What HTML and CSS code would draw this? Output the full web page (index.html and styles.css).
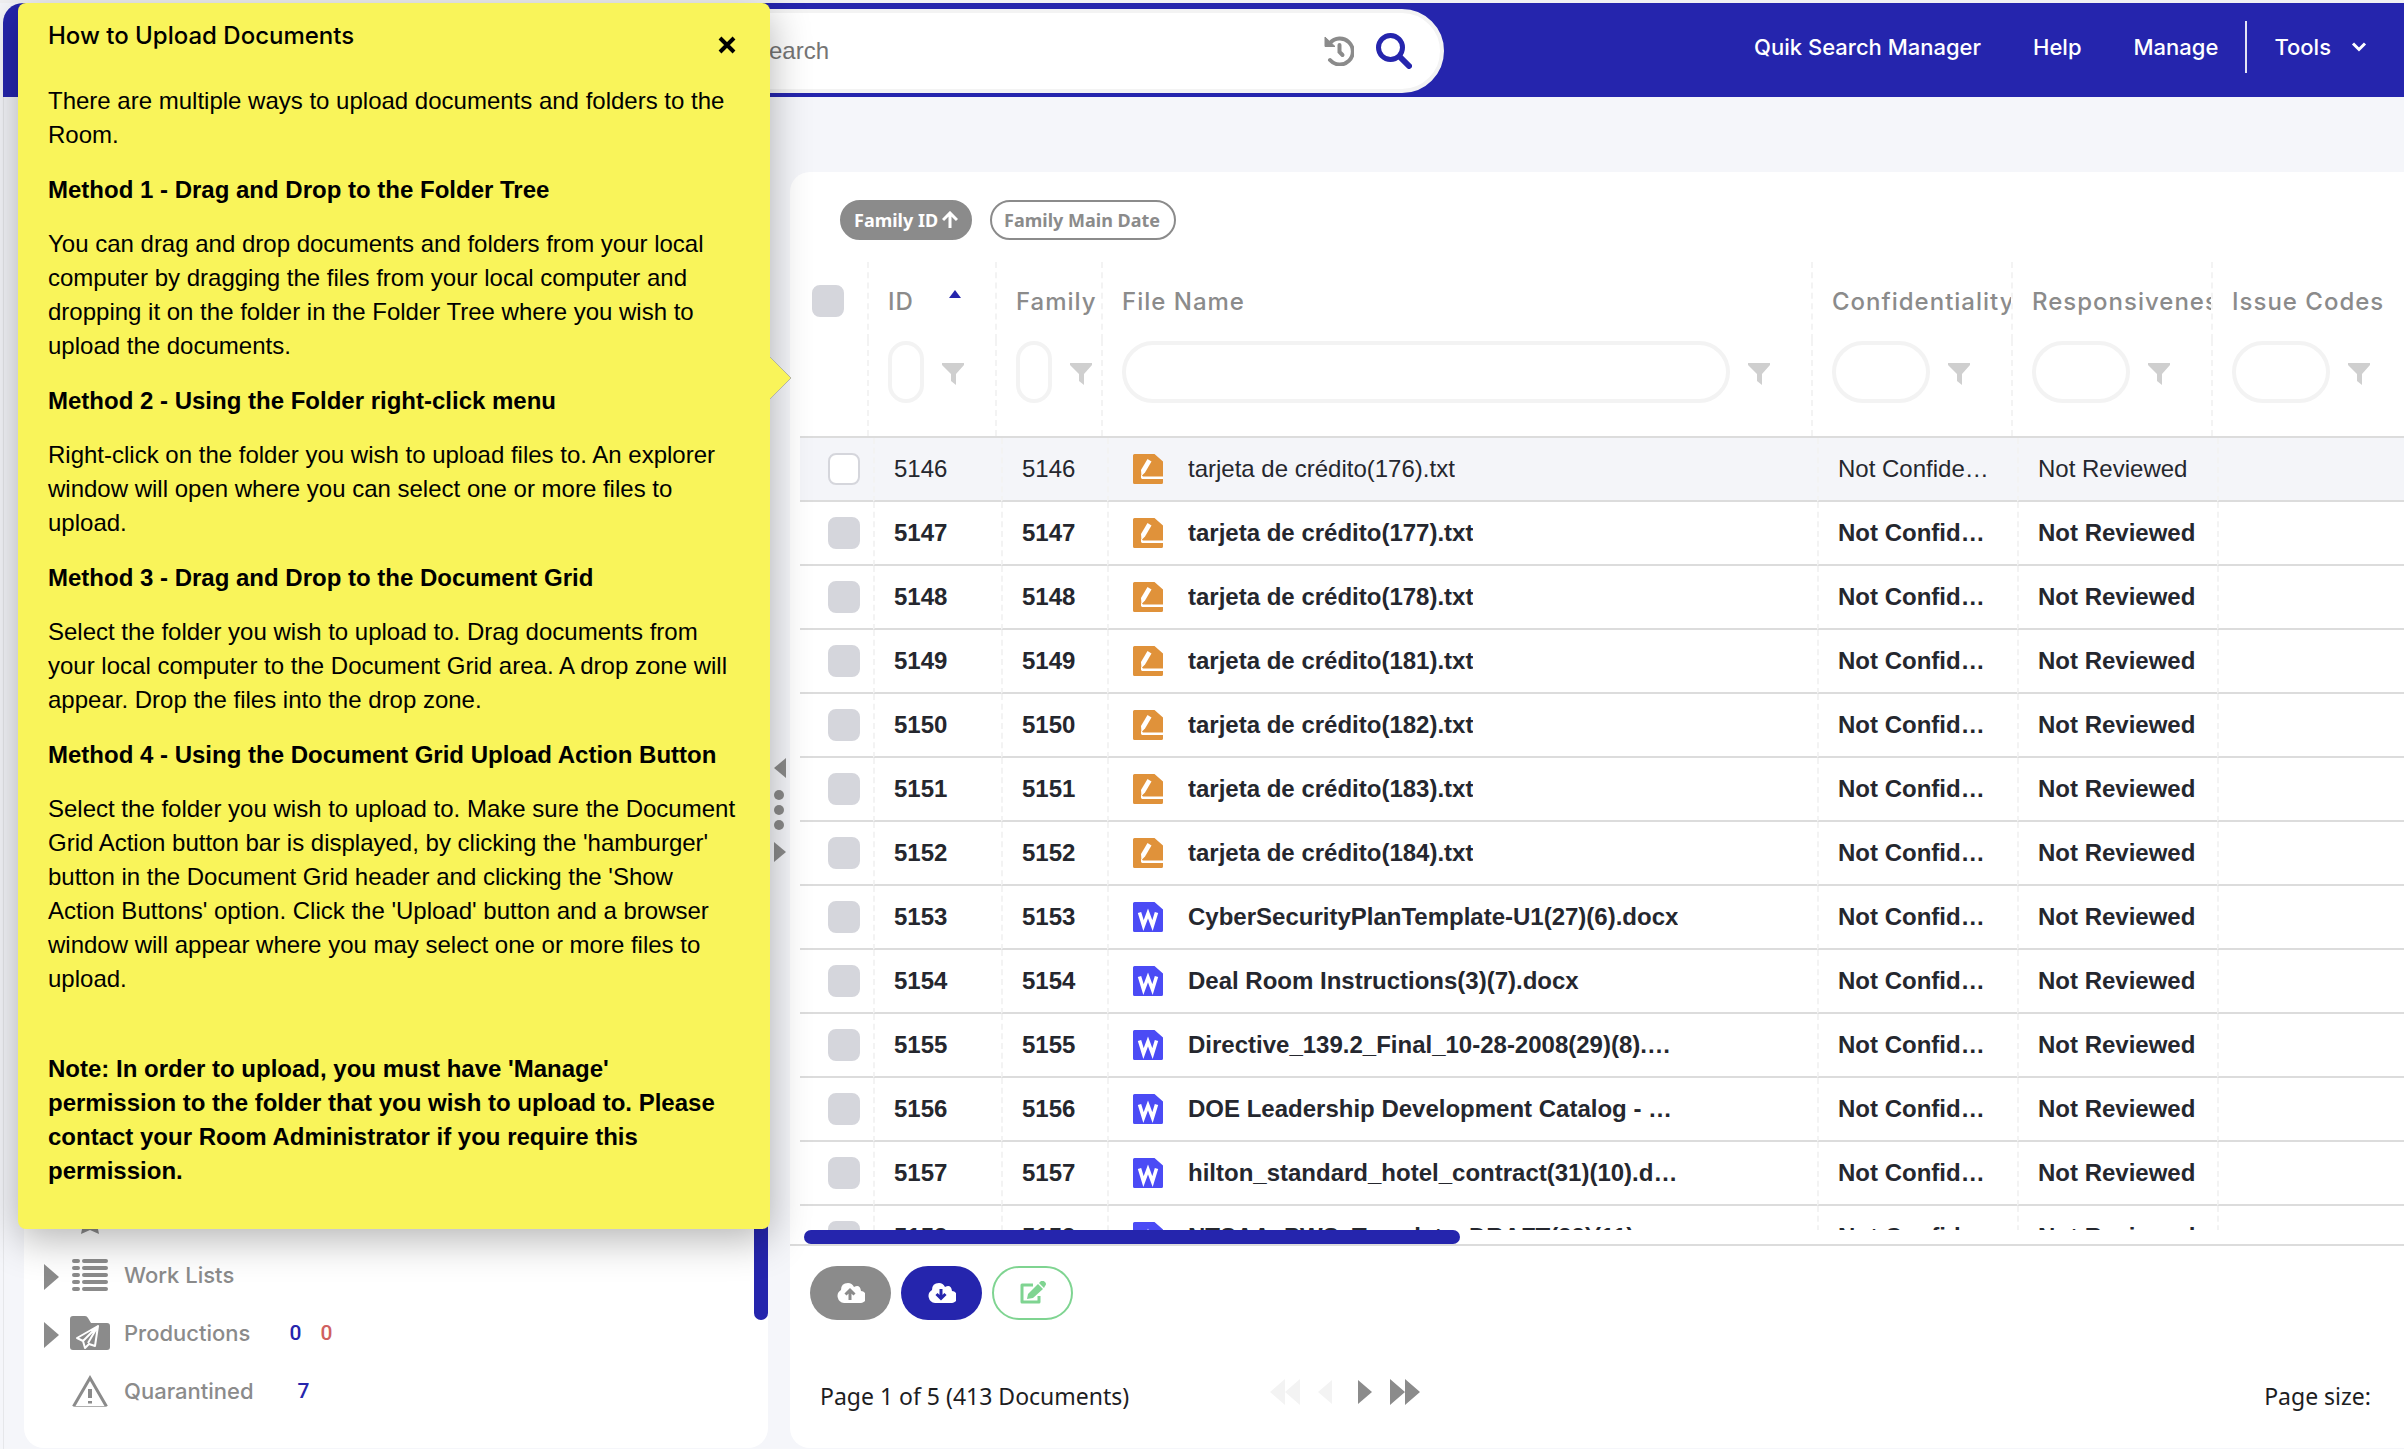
FILE: index.html
```html
<!DOCTYPE html>
<html lang="en">

<head>
    <meta charset="UTF-8">
    <meta name="viewport" content="width=device-width, initial-scale=1.0">
    <title>Documents</title>
    <link rel="stylesheet" href="styles.css">
</head>

<body>

    <!-- Shared icons -->
    <svg class="icon-defs" aria-hidden="true">
        <symbol id="i-funnel" viewBox="0 0 22 22">
            <path d="M0 0h22v2l-8 9v11l-5-4v-7L0 2z" fill="#cfcfcf" />
        </symbol>
        <symbol id="i-txt" viewBox="0 0 30 30">
            <path d="M1.500 0H21.500L30 7.500V28.500a1.500 1.500 0 0 1-1.500 1.500h-27A1.500 1.500 0 0 1 0 28.500v-27A1.500 1.500 0 0 1 1.500 0z" fill="#e0923a" />
            <path d="M14.500 5l4 2.500-6.500 11L8.500 22 8 16z" fill="#fff" />
            <path d="M8 20.500l2 2h20v2.500H9l-1-1z" fill="#fff" />
        </symbol>
        <symbol id="i-doc" viewBox="0 0 30 30">
            <path d="M1.500 0H21.500L30 7.500V28.500a1.500 1.500 0 0 1-1.500 1.500h-27A1.500 1.500 0 0 1 0 28.500v-27A1.500 1.500 0 0 1 1.500 0z" fill="#4b4bf5" />
            <path d="M6.500 10.500l4 13L15 11.500l4.500 12 4-13" fill="none" stroke="#fff" stroke-width="3.500" />
        </symbol>
    </svg>

    <header>
        <form class="search-box">
            <input type="text" placeholder="Search" aria-label="Search">
            <button type="button" aria-label="Search history">
                <svg width="30" height="30" viewBox="0 0 30 30">
                    <path d="M6 8a13 13 0 1 1 0 17" fill="none" stroke="#8b8b8b" stroke-width="4" stroke-linecap="round" transform="translate(0 -1)" />
                    <path d="M1 1l10 9.500H1z" fill="#8b8b8b" stroke="#8b8b8b" stroke-linejoin="round" />
                    <path d="M15.500 9v7l3 3" fill="none" stroke="#8b8b8b" stroke-width="4" stroke-linecap="round" />
                </svg>
            </button>
            <button type="button" aria-label="Run search">
                <svg width="36" height="36" viewBox="0 0 36 36">
                    <circle cx="14.500" cy="14.500" r="12" fill="none" stroke="#2525ad" stroke-width="5" />
                    <path d="M24.500 24.500l8.500 8.500" stroke="#2525ad" stroke-width="6" stroke-linecap="round" />
                </svg>
            </button>
        </form>
        <nav>
            <a href="#search-manager">Quik Search Manager</a>
            <a href="#help">Help</a>
            <a href="#manage">Manage</a>
            <a class="tools" href="#tools">Tools
                <svg width="16" height="10" viewBox="0 0 16 10"><path d="M2 1.500l6 6 6-6" fill="none" stroke="#fff" stroke-width="3" /></svg>
            </a>
        </nav>
    </header>

    <main>
        <aside class="tree-panel">
            <ul class="tree">
                <li class="starred">
                    <span class="tree-icon"><svg width="30" height="28" viewBox="0 0 30 28"><path d="M15 0l4 9 10 1-7 7 2 10-9-4-9 4 2-10-7-7 10-1z" fill="#8b8b8b" /></svg></span>
                </li>
                <li>
                    <span class="arrow"></span>
                    <span class="tree-icon">
                        <svg width="36" height="32" viewBox="0 0 36 32">
                            <g stroke="#8b8b8b" stroke-width="4" stroke-linecap="round">
                                <path d="M2 2h4M12 2h22M2 9h4M12 9h22M2 16h4M12 16h22M2 23h4M12 23h22M2 30h4M12 30h22" />
                            </g>
                        </svg>
                    </span>
                    <a href="#work-lists">Work Lists</a>
                </li>
                <li>
                    <span class="arrow"></span>
                    <span class="tree-icon">
                        <svg width="40" height="34" viewBox="0 0 40 34">
                            <path d="M3 0h12q2 0 3 2l3 5h16q3 0 3 3v21q0 3-3 3H3q-3 0-3-3V3q0-3 3-3z" fill="#8b8b8b" />
                            <path d="M28 10L7 22l6 3 2 7 4-4 6 2zM28 10L13 25M28 10L18 27" fill="none" stroke="#fff" stroke-width="2" stroke-linejoin="round" />
                        </svg>
                    </span>
                    <a href="#productions">Productions</a>
                    <span class="count">0</span>
                    <span class="count red">0</span>
                </li>
                <li>
                    <span class="arrow none"></span>
                    <span class="tree-icon">
                        <svg width="36" height="32" viewBox="0 0 36 32">
                            <path d="M1.500 31.500L18 3l16.500 28.500" fill="none" stroke="#8b8b8b" stroke-width="3" />
                            <path d="M2 31.500h32" stroke="#b0b0b0" />
                            <path d="M18 14v9M18 26v2.500" stroke="#8b8b8b" stroke-width="4" />
                        </svg>
                    </span>
                    <a href="#quarantined">Quarantined</a>
                    <span class="count single">7</span>
                </li>
            </ul>
            <div class="tree-scrollbar"></div>
        </aside>

        <div class="splitter">
            <svg width="14" height="106" viewBox="0 0 14 106">
                <g fill="#8b8b8b">
                    <path d="M12 0v20L0 10z" />
                    <circle cx="5" cy="37" r="5" />
                    <circle cx="5" cy="52" r="5" />
                    <circle cx="5" cy="67" r="5" />
                    <path d="M0 84v20l12-10z" />
                </g>
            </svg>
        </div>

        <section class="documents">
            <div class="chips">
                <button type="button" class="chip active">Family ID
                    <svg width="16" height="18" viewBox="0 0 16 18"><path d="M8 17V2M1 9l7-7 7 7" fill="none" stroke="#fff" stroke-width="3" /></svg>
                </button>
                <button type="button" class="chip">Family Main Date</button>
            </div>

            <table class="grid-head">
                <colgroup>
                    <col class="c-check"><col class="c-id"><col class="c-family"><col class="c-file"><col class="c-code"><col class="c-code"><col>
                </colgroup>
                <thead>
                    <tr class="titles">
                        <th><input type="checkbox" disabled aria-label="Select all"></th>
                        <th>ID <svg class="sort" width="12" height="8" viewBox="0 0 12 8"><path d="M6 0l6 8H0z" fill="#2525ad" /></svg></th>
                        <th>Family ID</th>
                        <th>File Name</th>
                        <th>Confidentiality</th>
                        <th>Responsiveness</th>
                        <th>Issue Codes</th>
                    </tr>
                    <tr class="filters" id="filters"></tr>
                </thead>
            </table>

            <div class="grid-scroll">
                <table class="grid-body">
                    <colgroup>
                        <col class="c-check"><col class="c-id"><col class="c-family"><col class="c-file"><col class="c-code"><col class="c-code"><col>
                    </colgroup>
                    <tbody id="rows"></tbody>
                </table>
            </div>
            <div class="h-scrollbar"><div class="thumb"></div></div>

            <div class="actions">
                <button type="button" class="upload" aria-label="Upload">
                    <svg width="28" height="20" viewBox="0 0 28 20">
                        <path d="M7 20a7 7 0 0 1-3-13Q4 0 11 0q4 0 6 4 6-3 7 4a6 6 0 0 1-1 12z" fill="#fff" />
                        <path d="M13 17V8M8.500 11.500L13 7l4.500 4.500" fill="none" stroke="#8b8b8b" stroke-width="3" />
                    </svg>
                </button>
                <button type="button" class="download" aria-label="Download">
                    <svg width="28" height="20" viewBox="0 0 28 20">
                        <path d="M7 20a7 7 0 0 1-3-13Q4 0 11 0q4 0 6 4 6-3 7 4a6 6 0 0 1-1 12z" fill="#fff" />
                        <path d="M13 6v9M8.500 11l4.500 4.500 4.500-4.500" fill="none" stroke="#2525ad" stroke-width="3" />
                    </svg>
                </button>
                <button type="button" class="edit" aria-label="Edit">
                    <svg width="26" height="24" viewBox="0 0 26 24">
                        <path d="M13 4H2v17h17v-6" fill="none" stroke="#7fd491" stroke-width="3" stroke-linejoin="round" />
                        <path d="M7 18l1-5L18 3l5 5-10 9z" fill="#7fd491" />
                        <path d="M19 2l2-2q2-1 4 1t0 4l-1 2z" fill="#7fd491" />
                    </svg>
                </button>
            </div>

            <div class="pager">
                <span class="page-info">Page 1 of 5 (413 Documents)</span>
                <div class="page-buttons">
                    <button type="button" disabled aria-label="First page"><svg width="30" height="26" viewBox="0 0 30 26"><path d="M15 0v26L0 13zM30 0v26L15 13z" /></svg></button>
                    <button type="button" disabled aria-label="Previous page"><svg width="14" height="24" viewBox="0 0 14 24"><path d="M14 0v24L0 12z" /></svg></button>
                    <button type="button" aria-label="Next page"><svg width="14" height="24" viewBox="0 0 14 24"><path d="M0 0v24l14-12z" /></svg></button>
                    <button type="button" aria-label="Last page"><svg width="30" height="26" viewBox="0 0 30 26"><path d="M0 0v26l15-13zM15 0v26l15-13z" /></svg></button>
                </div>
                <span class="page-size">Page size:</span>
            </div>
        </section>
    </main>

    <!-- Help popup over the folder tree -->
    <div class="help-popup" role="dialog" aria-labelledby="helpTitle">
        <button type="button" class="close-btn" aria-label="Close">
            <svg width="18" height="18" viewBox="0 0 18 18"><path d="M2 2l14 14M16 2L2 16" stroke="#000" stroke-width="4" /></svg>
        </button>
        <h2 id="helpTitle">How to Upload Documents</h2>
        <p>There are multiple ways to upload documents and folders to the Room.</p>
        <h3>Method 1 - Drag and Drop to the Folder Tree</h3>
        <p>You can drag and drop documents and folders from your local computer by dragging the files from your local computer and dropping it on the folder in the Folder Tree where you wish to upload the documents.</p>
        <h3>Method 2 - Using the Folder right-click menu</h3>
        <p>Right-click on the folder you wish to upload files to. An explorer window will open where you can select one or more files to upload.</p>
        <h3>Method 3 - Drag and Drop to the Document Grid</h3>
        <p>Select the folder you wish to upload to. Drag documents from your local computer to the Document Grid area. A drop zone will appear. Drop the files into the drop zone.</p>
        <h3>Method 4 - Using the Document Grid Upload Action Button</h3>
        <p>Select the folder you wish to upload to. Make sure the Document Grid Action button bar is displayed, by clicking the 'hamburger' button in the Document Grid header and clicking the 'Show Action Buttons' option. Click the 'Upload' button and a browser window will appear where you may select one or more files to upload.</p>
        <p class="note">Note: In order to upload, you must have 'Manage' permission to the folder that you wish to upload to. Please contact your Room Administrator if you require this permission.</p>
        <svg class="tip" width="22" height="44" viewBox="0 0 22 44">
            <path d="M0 1l21 21L0 43" fill="#f9f45a" stroke="#b5b5a0" />
        </svg>
    </div>

    <script>
        var files = [
            [5146, 'txt', 'tarjeta de crédito(176).txt'],
            [5147, 'txt', 'tarjeta de crédito(177).txt'],
            [5148, 'txt', 'tarjeta de crédito(178).txt'],
            [5149, 'txt', 'tarjeta de crédito(181).txt'],
            [5150, 'txt', 'tarjeta de crédito(182).txt'],
            [5151, 'txt', 'tarjeta de crédito(183).txt'],
            [5152, 'txt', 'tarjeta de crédito(184).txt'],
            [5153, 'doc', 'CyberSecurityPlanTemplate-U1(27)(6).docx'],
            [5154, 'doc', 'Deal Room Instructions(3)(7).docx'],
            [5155, 'doc', 'Directive_139.2_Final_10-28-2008(29)(8).docx'],
            [5156, 'doc', 'DOE Leadership Development Catalog - 2008.docx'],
            [5157, 'doc', 'hilton_standard_hotel_contract(31)(10).docx'],
            [5158, 'doc', 'NTSAA_PWS_Template_DRAFT(32)(11).docx']
        ];

        // Document rows, only the first one has been viewed
        var html = '';
        files.forEach(function (f, i) {
            html += '<tr class="' + (i === 0 ? 'viewed' : 'unread') + '">' +
                '<td><input type="checkbox" aria-label="Select ' + f[0] + '"' + (i === 0 ? '' : ' disabled') + '></td>' +
                '<td>' + f[0] + '</td><td>' + f[0] + '</td>' +
                '<td><div class="file"><svg width="30" height="30"><use href="#i-' + f[1] + '"/></svg><span>' + f[2] + '</span></div></td>' +
                '<td><div class="cut">Not Confidential</div></td><td>Not Reviewed</td><td></td></tr>';
        });
        document.getElementById('rows').innerHTML = html;

        // Filter boxes under the column titles
        var filters = [['ID', 'small'], ['Family ID', 'small'], ['File Name', 'large'], ['Confidentiality', ''], ['Responsiveness', ''], ['Issue Codes', '']];
        var cells = '<td></td>';
        filters.forEach(function (f) {
            cells += '<td><div class="filter"><input type="text" class="' + f[1] + '" aria-label="Filter ' + f[0] + '">' +
                '<button type="button" aria-label="Filter options ' + f[0] + '"><svg width="22" height="22"><use href="#i-funnel"/></svg></button></div></td>';
        });
        document.getElementById('filters').innerHTML = cells;
    </script>

</body>

</html>
```
FILE: styles.css
```css
:root {
    --blue: #2525ad;
    --gray: #8b8b8b;
    --page: #f5f6fa;
    --line: #dcdcdc;
    --soft: #f3f3f3;
    --yellow: #f9f45a;
}

* {
    box-sizing: border-box;
}

body {
    margin: 0;
    height: 100vh;
    display: flex;
    flex-direction: column;
    padding-left: 3px;
    border-top: 3px solid #f1f1f3;
    background-color: var(--page);
    font-family: "Liberation Sans", Arial, sans-serif;
    font-size: 24px;
    overflow: hidden;
}

button {
    border: 0;
    padding: 0;
    background: none;
    font: inherit;
    cursor: pointer;
}

svg {
    display: block;
}

.icon-defs {
    position: absolute;
    width: 0;
    height: 0;
}

/* Header */
header {
    flex: none;
    height: 94px;
    display: flex;
    align-items: flex-start;
    justify-content: space-between;
    background-color: var(--blue);
    border-top-left-radius: 20px;
}

.search-box {
    display: flex;
    align-items: center;
    gap: 22px;
    width: 59%;
    height: 84px;
    margin: 6px 0 0 24px;
    padding: 0 28px 0 722px;
    border: 4px solid var(--soft);
    border-radius: 42px;
    background-color: #fff;
}

.search-box input {
    flex: 1;
    min-width: 0;
    border: 0;
    padding: 0;
    outline: none;
    font: inherit;
}

.search-box input::placeholder {
    color: #757575;
}

nav {
    display: flex;
    height: 88px;
    align-items: center;
    font-family: Inter, "Liberation Sans", sans-serif;
    font-size: 22px;
    font-weight: 500;
}

nav a {
    margin-right: 52px;
    color: #fff;
    text-decoration: none;
}

nav a:nth-child(3) {
    margin-right: 27px;
}

nav .tools {
    display: flex;
    align-items: center;
    gap: 20px;
    height: 52px;
    margin-right: 37px;
    padding-left: 27px;
    border-left: 2px solid #e4e4f5;
}

/* Layout */
main {
    flex: 1;
    min-height: 0;
    display: grid;
    grid-template-columns: 744px 22px minmax(0, 1fr);
    padding: 0 0 1px 20px;
    border-left: 1px solid #e6e7ea;
}

.tree-panel {
    display: flex;
    justify-content: space-between;
    margin-top: 75px;
    border-radius: 20px;
    background-color: #fff;
}

.tree {
    align-self: flex-end;
    margin: 0 0 28px;
    padding: 0 0 0 20px;
    list-style: none;
}

.tree li {
    display: flex;
    align-items: center;
    height: 58px;
}

.tree .arrow {
    border-left: 15px solid var(--gray);
    border-top: 13px solid transparent;
    border-bottom: 13px solid transparent;
    margin-top: 4px;
}

.tree .arrow.none {
    border-left-color: transparent;
}

.tree-icon {
    display: flex;
    justify-content: center;
    width: 40px;
    margin: 0 14px 0 11px;
}

.tree .starred {
    padding: 8px 0 0 15px;
}

.tree a {
    color: var(--gray);
    font-family: Inter, "Liberation Sans", sans-serif;
    font-size: 22px;
    font-weight: 500;
    text-decoration: none;
}

.count {
    margin-left: 19px;
    color: var(--blue);
    font-family: Roboto, sans-serif;
    font-size: 21px;
    font-weight: 500;
}

.tree a + .count {
    margin-left: 39px;
}

.tree a + .count.single {
    margin-left: 44px;
}

.count.red {
    color: #d06060;
}

.tree-scrollbar {
    width: 14px;
    margin: 20px 0 128px;
    border-radius: 7px;
    background-color: var(--blue);
}

.splitter {
    display: flex;
    align-items: center;
    padding: 76px 0 0 6px;
}

/* Document grid */
.documents {
    display: flex;
    flex-direction: column;
    margin-top: 75px;
    border-radius: 20px 0 0 20px;
    background-color: #fff;
    overflow: hidden;
}

.chips {
    display: flex;
    gap: 18px;
    padding: 28px 0 22px 50px;
}

.chip {
    display: flex;
    align-items: center;
    gap: 4px;
    height: 40px;
    padding: 0 14px 0 12px;
    border: 2px solid var(--gray);
    border-radius: 20px;
    color: var(--gray);
    font-family: "Noto Sans", sans-serif;
    font-size: 18px;
    font-weight: 700;
}

.chip.active {
    padding-right: 12px;
    background-color: var(--gray);
    color: #fff;
}

table {
    width: 100%;
    table-layout: fixed;
    border-collapse: separate;
    border-spacing: 0;
}

.c-check { width: 73px; }
.c-id { width: 128px; }
.c-family { width: 106px; }
.c-file { width: 710px; }
.c-code { width: 200px; }

td,
th {
    padding: 0 0 0 19px;
    border-left: 2px dashed var(--soft);
    text-align: left;
    white-space: nowrap;
    overflow: hidden;
}

td:first-child,
th:first-child {
    border-left: 0;
}

.grid-head {
    flex: none;
    padding-left: 4px;
}

.titles th {
    height: 78px;
    color: var(--gray);
    font-family: Inter, "Liberation Sans", sans-serif;
    font-weight: 500;
    letter-spacing: 1px;
}

.titles th:first-child {
    padding-left: 18px;
}

.sort {
    display: inline-block;
    margin: 0 0 12px 28px;
}

.filters td {
    height: 96px;
    padding-bottom: 32px;
}

.filter {
    display: flex;
    align-items: center;
    gap: 18px;
}

.filter input {
    width: 98px;
    height: 62px;
    padding: 0 10px;
    border: 4px solid var(--soft);
    border-radius: 31px;
    outline: none;
    font: inherit;
}

.filter button {
    padding-top: 4px;
}

.filter .small {
    width: 36px;
    padding: 0;
    border-radius: 18px;
}

.filter .large {
    width: 608px;
}

.grid-scroll {
    flex: 1;
    min-height: 0;
    margin-left: 10px;
    border-top: 2px solid var(--line);
    overflow: hidden;
}

.grid-body td {
    height: 64px;
    border-bottom: 2px solid var(--line);
    color: #25272e;
}

.grid-body td:first-child {
    padding-left: 28px;
}

.grid-body td:nth-child(4) {
    padding-left: 24px;
}

.unread {
    font-weight: 700;
}

.viewed {
    background-color: #f4f5f9;
}

input[type="checkbox"] {
    display: block;
    appearance: none;
    width: 32px;
    height: 32px;
    margin: 0;
    border: 2px solid #d5d6dc;
    border-radius: 8px;
    background-color: #fff;
}

input[type="checkbox"]:disabled {
    background-color: #d5d6dc;
}

.file {
    display: flex;
    align-items: center;
    gap: 25px;
    width: 546px;
}

.file svg {
    flex: none;
}

.file span,
.cut {
    overflow: hidden;
    text-overflow: ellipsis;
}

.cut {
    width: 152px;
}

.h-scrollbar {
    flex: none;
    height: 16px;
    padding-left: 14px;
    border-bottom: 2px solid var(--line);
}

.thumb {
    width: 41%;
    height: 14px;
    border-radius: 7px;
    background-color: var(--blue);
}

.actions {
    display: flex;
    gap: 10px;
    padding: 20px 20px 0;
}

.actions button {
    display: flex;
    align-items: center;
    justify-content: center;
    width: 81px;
    height: 54px;
    border-radius: 27px;
}

.actions .upload {
    background-color: var(--gray);
}

.actions .download {
    background-color: var(--blue);
}

.actions .edit {
    border: 2px solid #7fd491;
}

.pager {
    display: grid;
    grid-template-columns: 450px 1fr auto;
    align-items: center;
    height: 128px;
    padding: 24px 33px 0 30px;
    color: #1d1d1f;
    font-family: "Noto Sans", sans-serif;
    font-size: 23px;
}

.page-buttons {
    display: flex;
    align-items: center;
    gap: 18px;
    margin-bottom: 8px;
    fill: var(--gray);
}

.page-buttons button:nth-child(3) {
    margin-left: 8px;
}

.page-buttons button:disabled {
    fill: var(--soft);
}

/* Help popup */
.help-popup {
    position: absolute;
    z-index: 10;
    top: 3px;
    left: 18px;
    width: 752px;
    padding: 16px 30px 41px;
    border-radius: 8px;
    background-color: var(--yellow);
    box-shadow: 0 10px 40px rgba(0, 0, 0, 0.3);
    line-height: 34px;
}

.help-popup h2,
.help-popup h3,
.help-popup p {
    margin: 0 0 21px;
    font-size: 24px;
}

.help-popup h3 {
    margin-bottom: 20px;
}

.help-popup h2 {
    margin-bottom: 31px;
    font-family: Inter, "Liberation Sans", sans-serif;
    font-weight: 500;
}

.help-popup .note {
    margin: 56px 0 0;
    font-weight: 700;
}

.close-btn {
    position: absolute;
    top: 33px;
    right: 34px;
}

.tip {
    position: absolute;
    top: 353px;
    left: 100%;
}
```
